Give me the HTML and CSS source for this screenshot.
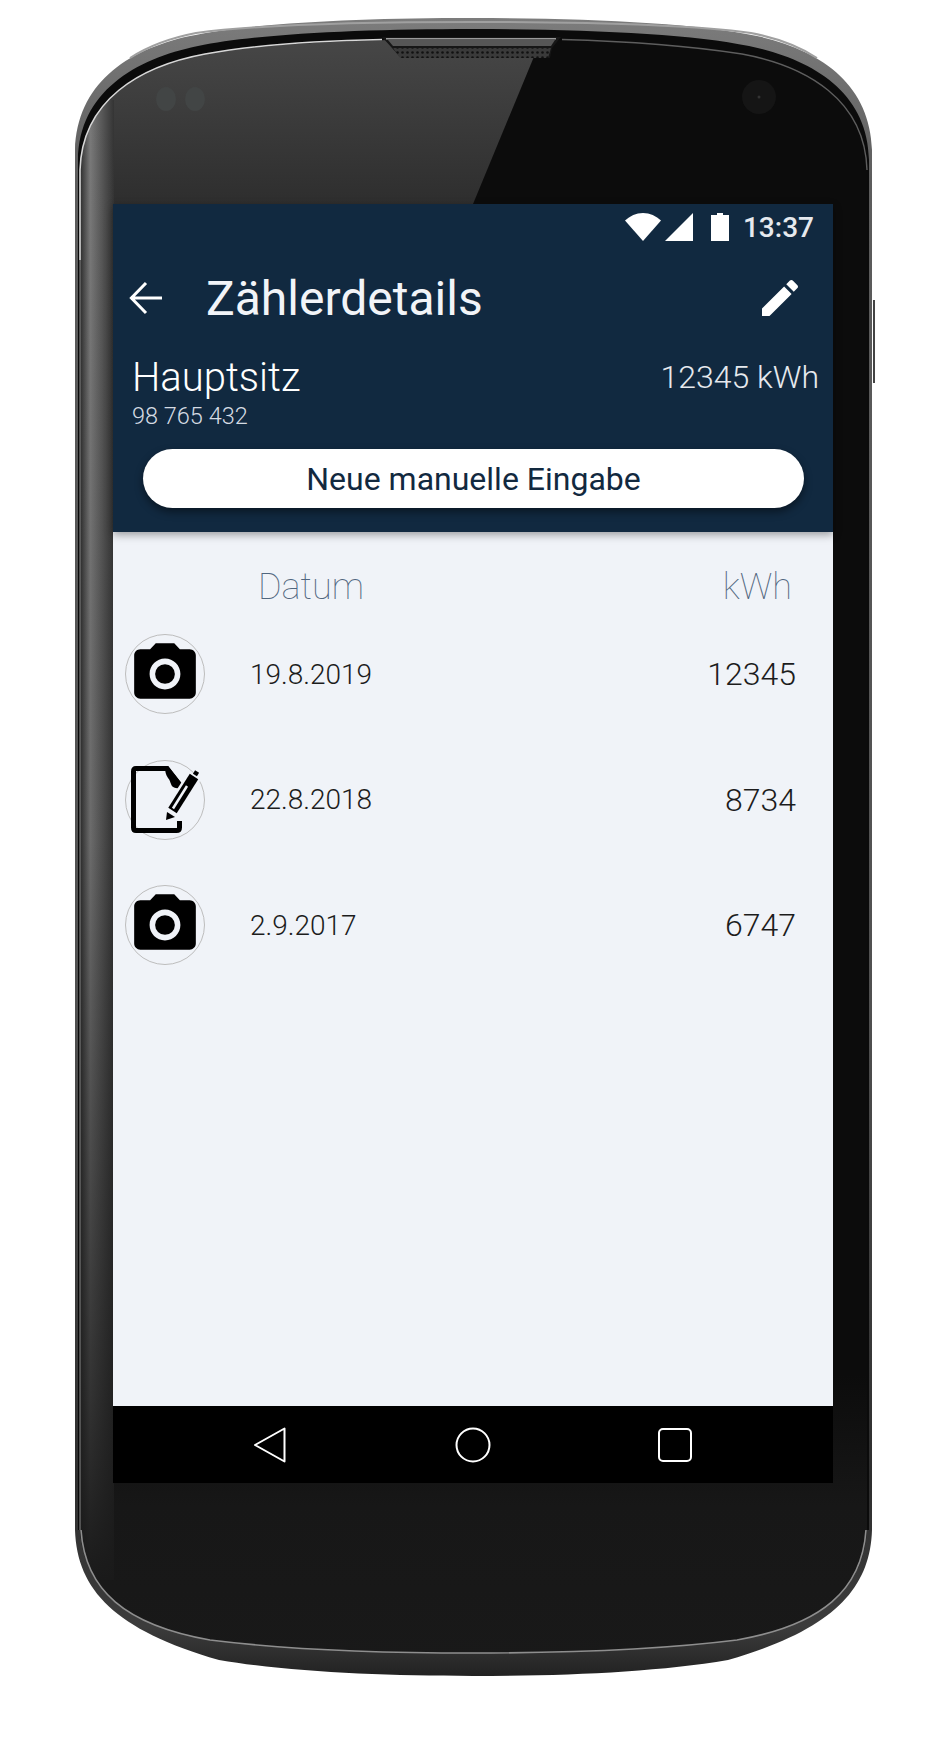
FILE: index.html
```html
<!DOCTYPE html>
<html lang="de">
<head>
  <meta charset="UTF-8">
  <title>Zählerdetails</title>
  <link rel="stylesheet" href="styles.css">
</head>
<body>
  <div class="stage">
    <!-- Telefon-Gehäuse, liegt hinter dem Bildschirm -->
    <svg class="phone-art" width="947" height="1744" viewBox="0 0 947 1744">
      <defs>
        <linearGradient id="rim" x1="0" y1="0" x2="0" y2="1">
          <stop offset="0" stop-color="#7c7c7c"/>
          <stop offset="0.1" stop-color="#5c5c5c"/>
          <stop offset="0.6" stop-color="#505050"/>
          <stop offset="0.88" stop-color="#2e2e2e"/>
          <stop offset="0.97" stop-color="#3c3c3c"/>
          <stop offset="1" stop-color="#222"/>
        </linearGradient>
        <linearGradient id="glare" x1="0" y1="0" x2="0" y2="1">
          <stop offset="0" stop-color="#484848"/>
          <stop offset="1" stop-color="#2e2e2e"/>
        </linearGradient>
        <linearGradient id="dark" x1="0" y1="0" x2="0" y2="1">
          <stop offset="0" stop-color="#0c0c0c"/>
          <stop offset="0.82" stop-color="#0c0c0c"/>
          <stop offset="0.9" stop-color="#171717"/>
          <stop offset="1" stop-color="#191919"/>
        </linearGradient>
        <linearGradient id="strip" x1="0" y1="0" x2="1" y2="0">
          <stop offset="0" stop-color="#2c2c2c"/>
          <stop offset="0.3" stop-color="#7a7a7a"/>
          <stop offset="0.6" stop-color="#5c5c5c"/>
          <stop offset="1" stop-color="#343434"/>
        </linearGradient>
        <linearGradient id="stripShade" x1="0" y1="0" x2="0" y2="1">
          <stop offset="0" stop-color="#1a1a1a" stop-opacity="0"/>
          <stop offset="0.5" stop-color="#1a1a1a" stop-opacity="0.15"/>
          <stop offset="0.88" stop-color="#1a1a1a" stop-opacity="0.75"/>
          <stop offset="1" stop-color="#1a1a1a" stop-opacity="1"/>
        </linearGradient>
        <pattern id="mesh" width="5" height="5" patternUnits="userSpaceOnUse">
          <rect width="5" height="5" fill="#3a3a3a"/>
          <circle cx="2.500" cy="2.500" r="1.300" fill="#111"/>
        </pattern>
        <clipPath id="glassClip">
          <path d="M473 39C360 39 260 44 205 54C140 66 82 100 80 170V1530C84 1590 125 1625 210 1640C290 1650 380 1653 473 1653C567 1653 657 1650 737 1640C822 1625 863 1590 867 1530V170C865 100 807 66 742 54C687 44 587 39 473 39Z"/>
        </clipPath>
      </defs>

      <path fill="url(#rim)" d="M473 18C360 18 250 23 190 36C125 50 77 85 75 150V1530C77 1590 115 1630 219 1660C290 1672 380 1676 473 1676C567 1676 657 1672 728 1660C832 1630 870 1590 872 1530V150C870 85 822 50 757 36C697 23 587 18 473 18Z"/>
      <path fill="none" stroke="#a0a0a0" stroke-width="2" d="M130 58C150 45 170 38 196 33C255 25 360 22 473 22C587 22 692 25 751 33C777 38 797 45 817 58"/>
      <path fill="#0b0b0b" d="M473 29C360 29 255 34 198 46C135 59 79 92 78 160V1530H869V160C868 92 812 59 749 46C692 34 587 29 473 29Z"/>

      <g clip-path="url(#glassClip)">
        <rect x="70" y="30" width="810" height="1640" fill="url(#dark)"/>
        <polygon points="70,30 545,30 473,204 70,204" fill="url(#glare)"/>
        <rect x="80" y="100" width="34" height="1480" fill="url(#strip)"/>
        <rect x="80" y="100" width="34" height="1480" fill="url(#stripShade)"/>
        <ellipse cx="166" cy="99" rx="10" ry="12" fill="#424545"/>
        <ellipse cx="195" cy="99" rx="10" ry="12" fill="#424545"/>
        <circle cx="759" cy="97" r="17" fill="#151515"/>
        <circle cx="759" cy="97" r="1.500" fill="#333"/>
      </g>

      <path fill="none" stroke="#d8d8d8" stroke-width="1.600" d="M382 39.500C300 41 250 46 205 54C140 66 82 100 80 170V260"/>
      <path fill="none" stroke="#7a7a7a" stroke-width="1.200" d="M80 260V1530"/>
      <path fill="none" stroke="#5e5e5e" stroke-width="1.400" d="M562 39.500C620 41 690 46 742 54C807 66 865 100 867 170"/>
      <path fill="none" stroke="#8e8e8e" stroke-width="1.600" d="M81 1530C85 1590 125 1625 210 1640C290 1650 380 1653 473 1653C567 1653 657 1650 737 1640C822 1625 862 1590 866 1530"/>

      <!-- Lautsprecher -->
      <polygon points="382,37 561,37 552,48 550,58 401,58 392,48" fill="#161616"/>
      <rect x="386" y="38" width="170" height="1.500" fill="#999"/>
      <polygon points="388,40 555,40 551,46 393,46" fill="#565656"/>
      <polygon points="393,48 551,48 548,58 400,58" fill="url(#mesh)"/>
      <rect x="873" y="300" width="2" height="83" fill="#444"/>
    </svg>

    <div class="screen">
      <header class="app-header">
        <div class="statusbar">
          <svg width="36" height="28" viewBox="0 0 36 28"><path d="M0 7.500C5 3 11 0 18 0s13 3 18 7.500L18 28z" fill="#fff"/></svg>
          <svg class="st-signal" width="28" height="28" viewBox="0 0 28 28"><path d="M28 0v28H0z" fill="#fff"/></svg>
          <svg class="st-battery" width="18" height="28" viewBox="0 0 18 28"><path d="M6 0h6v2h6v26H0V2h6z" fill="#fff"/></svg>
          <span class="st-time">13:37</span>
        </div>

        <div class="toolbar">
          <svg width="48" height="48" viewBox="0 0 24 24"><path d="M20 12H5M12 4.500L4.700 12l7.300 7.500" fill="none" stroke="#fff" stroke-width="1.500"/></svg>
          <h1 class="tb-title">Zählerdetails</h1>
          <svg width="48" height="48" viewBox="0 0 24 24"><path d="M3 17.250V21h3.750L17.810 9.940l-3.750-3.750L3 17.250zM20.710 7.040c.39-.39.39-1.020 0-1.410l-2.340-2.340c-.39-.39-1.020-.39-1.410 0l-1.830 1.830 3.750 3.750 1.830-1.830z" fill="#fff"/></svg>
        </div>

        <div class="meter">
          <div>
            <div class="meter-name">Hauptsitz</div>
            <div class="meter-no">98 765 432</div>
          </div>
          <div class="meter-value">12345 kWh</div>
        </div>

        <button class="new-entry">Neue manuelle Eingabe</button>
      </header>

      <main class="readings">
        <div class="col-heads">
          <span>Datum</span>
          <span>kWh</span>
        </div>

        <div class="row">
          <div class="badge">
            <svg width="74" height="74" viewBox="0 0 24 24"><circle cx="12" cy="12" r="3.200"/><path d="M9 2L7.170 4H4c-1.100 0-2 .9-2 2v12c0 1.100.9 2 2 2h16c1.100 0 2-.9 2-2V6c0-1.100-.9-2-2-2h-3.170L15 2H9zm3 15c-2.760 0-5-2.240-5-5s2.240-5 5-5 5 2.240 5 5-2.240 5-5 5z"/></svg>
          </div>
          <span class="row-date">19.8.2019</span>
          <span class="row-value">12345</span>
        </div>

        <div class="row">
          <div class="badge">
            <svg width="80" height="80" viewBox="0 0 80 80">
              <path d="M54.500 61v6.500c0 2-1 3-3 3H11c-2 0-2.500-1-2.500-3V11.500c0-2 .5-3 2.500-3H42L55 25" fill="none" stroke="#000" stroke-width="5"/>
              <path d="M40 6h3l14 18v4c-5 1-10 0-11-4-1-2-1-4-3-6-2-3-3-6-3-12z" fill="#000"/>
              <path d="M47 51L70 15" stroke="#f0f3f8" stroke-width="15" fill="none"/>
              <path d="M41 60l1-8 8 5z" fill="#000"/>
              <path d="M47.500 50.500L69 16.500" stroke="#000" stroke-width="10" fill="none"/>
              <path d="M48 48.500L62 26" stroke="#f0f3f8" stroke-width="2.500" fill="none"/>
              <path d="M69 12l4 2.500" stroke="#000" stroke-width="4" fill="none"/>
            </svg>
          </div>
          <span class="row-date">22.8.2018</span>
          <span class="row-value">8734</span>
        </div>

        <div class="row">
          <div class="badge">
            <svg width="74" height="74" viewBox="0 0 24 24"><circle cx="12" cy="12" r="3.200"/><path d="M9 2L7.170 4H4c-1.100 0-2 .9-2 2v12c0 1.100.9 2 2 2h16c1.100 0 2-.9 2-2V6c0-1.100-.9-2-2-2h-3.170L15 2H9zm3 15c-2.760 0-5-2.240-5-5s2.240-5 5-5 5 2.240 5 5-2.240 5-5 5z"/></svg>
          </div>
          <span class="row-date">2.9.2017</span>
          <span class="row-value">6747</span>
        </div>
      </main>

      <nav class="navbar">
        <svg width="34" height="38" viewBox="0 0 34 38"><path d="M31.500 2.500v33L2 19z" fill="none" stroke="#fff" stroke-width="2" stroke-linejoin="round"/></svg>
        <svg width="36" height="36" viewBox="0 0 36 36"><circle cx="18" cy="18" r="16.500" fill="none" stroke="#fff" stroke-width="2"/></svg>
        <svg width="36" height="36" viewBox="0 0 36 36"><rect x="2" y="2" width="32" height="32" rx="4" fill="none" stroke="#fff" stroke-width="2"/></svg>
      </nav>
    </div>
  </div>
</body>
</html>
```

FILE: styles.css
```css
html, body {
  margin: 0;
  background: #fff;
}
.stage {
  position: relative;
  width: 947px;
  height: 1744px;
  padding: 204px 114px 0 113px;
  box-sizing: border-box;
  overflow: hidden;
  font-family: Roboto, sans-serif;
}
.phone-art {
  position: absolute;
  left: 0;
  top: 0;
}
.screen {
  position: relative;
  width: 720px;
  height: 1279px;
  display: flex;
  flex-direction: column;
  background: #f0f3f8;
}

/* Kopfbereich */
.app-header {
  height: 328px;
  box-sizing: border-box;
  flex: none;
  background: #112940;
  color: #fff;
  box-shadow: 0 3px 8px rgba(0, 0, 0, 0.35);
  position: relative;
}
.statusbar {
  display: flex;
  justify-content: flex-end;
  align-items: center;
  height: 28px;
  padding: 9px 19px 0 0;
}
.st-signal {
  margin-left: 4px;
}
.st-battery {
  margin-left: 18px;
}
.st-time {
  margin-left: 14px;
  font-size: 28px;
  font-weight: 500;
  color: #e6e9ee;
}
.toolbar {
  display: flex;
  align-items: center;
  height: 48px;
  padding: 33px 29px 0 9px;
}
.tb-title {
  flex: 1;
  margin: 0 0 0 36px;
  font-size: 48px;
  font-weight: 400;
  color: #f2f4f8;
}
.meter {
  display: flex;
  justify-content: space-between;
  padding: 32px 14px 0 19px;
}
.meter-name {
  font-size: 40px;
  font-weight: 300;
  line-height: 48px;
}
.meter-no {
  font-size: 23.500px;
  font-weight: 300;
  line-height: 28px;
  color: #d5dbe3;
}
.meter-value {
  font-size: 32px;
  font-weight: 300;
  line-height: 46px;
  color: #e6e9ee;
}
.new-entry {
  display: block;
  width: 661px;
  height: 59px;
  margin: 19px 0 0 30px;
  border: none;
  border-radius: 30px;
  background: #fff;
  color: #12293f;
  font-family: Roboto, sans-serif;
  font-size: 32px;
  box-shadow: 0 4px 8px rgba(0, 0, 0, 0.45);
}

/* Liste */
.readings {
  flex: 1;
}
.col-heads {
  display: flex;
  justify-content: space-between;
  padding: 33px 41px 0 145px;
  font-size: 36px;
  font-weight: 100;
  line-height: 44px;
  color: #50667e;
}
.row {
  display: flex;
  align-items: center;
  height: 80px;
  padding: 0 37px 0 12px;
  margin-bottom: 45.500px;
}
.col-heads + .row {
  margin-top: 25px;
}
.badge {
  display: flex;
  align-items: center;
  justify-content: center;
  flex: none;
  width: 80px;
  height: 80px;
  box-sizing: border-box;
  border: 1px solid #bdbdbd;
  border-radius: 50%;
}
.badge svg {
  flex: none;
}
.row-date {
  flex: 1;
  margin-left: 45px;
  font-size: 28px;
  font-weight: 300;
  color: #1c1c1c;
}
.row-value {
  font-size: 32px;
  font-weight: 300;
  color: #1c1c1c;
}

/* Android-Navigation */
.navbar {
  flex: none;
  height: 77px;
  display: grid;
  grid-template-columns: 36px 36px 36px;
  justify-content: center;
  column-gap: 166px;
  align-items: center;
  background: #000;
}
```
